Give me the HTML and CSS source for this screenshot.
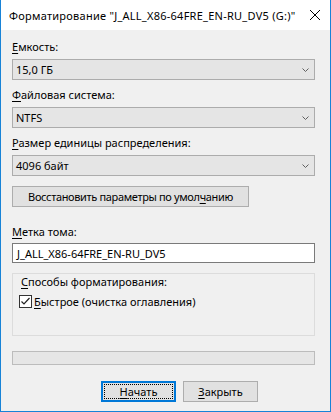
FILE: index.html
```html
<!DOCTYPE html>
<html lang="ru">
<head>
<meta charset="utf-8">
<link rel="stylesheet" href="styles.css">
</head>
<body>
<div class="window">
  <div class="titlebar">
    <span class="title">Форматирование "J_ALL_X86-64FRE_EN-RU_DV5 (G:)"</span>
    <svg class="close" width="10" height="10" viewBox="0 0 10 10"><path d="M0 0L10 10M10 0L0 10" stroke="#000" stroke-width="1" fill="none"/></svg>
  </div>
  <div class="content">
    <div class="field">
      <div class="label"><u>Е</u>мкость:</div>
      <div class="combo"><span>15,0 ГБ</span><svg class="chev" width="7" height="4" viewBox="0 0 7 4"><polyline points="0.5,0.5 3.5,3.5 6.5,0.5" fill="none" stroke="#606060" stroke-width="1"/></svg></div>
    </div>
    <div class="field">
      <div class="label"><u>Ф</u>айловая система:</div>
      <div class="combo"><span>NTFS</span><svg class="chev" width="7" height="4" viewBox="0 0 7 4"><polyline points="0.5,0.5 3.5,3.5 6.5,0.5" fill="none" stroke="#606060" stroke-width="1"/></svg></div>
    </div>
    <div class="field">
      <div class="label"><u>Р</u>азмер единицы распределения:</div>
      <div class="combo"><span>4096 байт</span><svg class="chev" width="7" height="4" viewBox="0 0 7 4"><polyline points="0.5,0.5 3.5,3.5 6.5,0.5" fill="none" stroke="#606060" stroke-width="1"/></svg></div>
    </div>
    <div class="btn restore">Восстановить параметры по умол<u>ч</u>анию</div>
    <div class="label volume-label"><u>М</u>етка тома:</div>
    <div class="textbox">J_ALL_X86-64FRE_EN-RU_DV5</div>
    <div class="group">
      <div class="legend"><u>С</u>пособы форматирования:</div>
      <div class="check-row">
        <span class="checkbox"><svg width="11" height="11" viewBox="0 0 11 11"><polyline points="1.5,5.5 4,8 9.5,2" fill="none" stroke="#222" stroke-width="1.2"/></svg></span>
        <span><u>Б</u>ыстрое (очистка оглавления)</span>
      </div>
    </div>
    <div class="progress"></div>
    <div class="actions">
      <div class="btn action default"><span class="focus"><u>Н</u>ачать</span></div>
      <div class="btn action"><u>З</u>акрыть</div>
    </div>
  </div>
</div>
</body>
</html>
```
FILE: styles.css
```css
html, body {
  margin: 0;
  padding: 0;
  background: #f0f0f0;
}
.window {
  width: 331px;
  height: 412px;
  box-sizing: border-box;
  border: 1px solid #1883d7;
  border-top: none;
  background: #f0f0f0;
  font-family: "Noto Sans", "Open Sans", sans-serif;
  font-size: 11px;
  color: #000;
  display: flex;
  flex-direction: column;
}
.titlebar {
  height: 30px;
  background: #fff;
  display: flex;
  align-items: center;
  padding: 0 10px 0 8px;
  flex: none;
}
.title {
  flex: 1;
  white-space: nowrap;
  letter-spacing: 0.25px;
}
.close {
  display: block;
}
.content {
  padding: 9px 15px 0 11px;
}
.field + .field {
  margin-top: 7px;
}
.label {
  height: 16px;
  line-height: 16px;
  white-space: nowrap;
}
u {
  text-decoration: underline;
  text-underline-offset: 2px;
}
.combo {
  margin-top: 4px;
  height: 21px;
  box-sizing: border-box;
  border: 1px solid #acacac;
  background: #e5e5e5;
  display: flex;
  align-items: center;
  justify-content: space-between;
  padding: 0 5px 0 3px;
}
.chev {
  display: block;
}
.btn {
  height: 21px;
  box-sizing: border-box;
  border: 1px solid #adadad;
  background: #e1e1e1;
  display: flex;
  align-items: center;
  justify-content: center;
  white-space: nowrap;
}
.restore {
  margin-top: 10px;
  width: 237px;
  letter-spacing: -0.35px;
}
.volume-label {
  margin-top: 17px;
}
.textbox {
  margin-top: 3px;
  height: 20px;
  box-sizing: border-box;
  border: 1px solid #7a7a7a;
  background: #fff;
  padding: 0 4px;
  display: flex;
  align-items: center;
}
.group {
  margin-top: 10px;
  height: 63px;
  box-sizing: border-box;
  border: 1px solid #dcdcdc;
  padding: 0 0 0 6px;
}
.legend {
  height: 15px;
  line-height: 15px;
  padding-left: 2px;
}
.check-row {
  margin-top: 6px;
  display: flex;
  align-items: center;
  gap: 2px;
  height: 13px;
}
.checkbox {
  width: 13px;
  height: 13px;
  box-sizing: border-box;
  border: 1px solid #333;
  background: #fff;
  display: flex;
  align-items: center;
  justify-content: center;
}
.checkbox svg {
  display: block;
}
.progress {
  margin-top: 15px;
  height: 14px;
  box-sizing: border-box;
  border: 1px solid #bcbcbc;
  background: #e6e6e6;
}
.actions {
  margin-top: 16px;
  display: flex;
  gap: 7px;
  padding-left: 89px;
}
.action {
  width: 75px;
}
.default {
  border: 2px solid #0078d7;
  padding: 1px;
}
.focus {
  flex: 1;
  align-self: stretch;
  border: 1px dotted #000;
  display: flex;
  align-items: center;
  justify-content: center;
}
```
